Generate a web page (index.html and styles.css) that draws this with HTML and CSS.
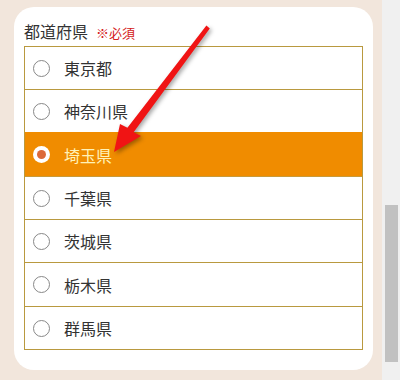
FILE: index.html
```html
<!DOCTYPE html>
<html lang="ja">
<head>
<meta charset="utf-8">
<link rel="stylesheet" href="styles.css">
</head>
<body>
<div class="page">
  <div class="main">
    <div class="card">
      <div class="label">都道府県<span class="req">※必須</span></div>
      <div class="list">
        <div class="row"><span class="radio"></span><span class="name">東京都</span></div>
        <div class="row"><span class="radio"></span><span class="name">神奈川県</span></div>
        <div class="row selected"><span class="radio"></span><span class="name">埼玉県</span></div>
        <div class="row"><span class="radio"></span><span class="name">千葉県</span></div>
        <div class="row"><span class="radio"></span><span class="name">茨城県</span></div>
        <div class="row"><span class="radio"></span><span class="name">栃木県</span></div>
        <div class="row"><span class="radio"></span><span class="name">群馬県</span></div>
      </div>
    </div>
  </div>
  <div class="scrollbar"><div class="thumb"></div></div>
  <svg class="arrow" width="400" height="380" viewBox="0 0 400 380">
    <polygon points="206.4,25.4 209.8,28.4 133.6,132.3 141,136 114,152 120,124 127.4,127.7" fill="#f01414"/>
  </svg>
</div>
</body>
</html>
```
FILE: styles.css
```css
html, body {
  margin: 0;
  padding: 0;
}
body {
  background: #f2e6dc;
  font-family: "Noto Sans CJK JP", "Noto Sans", sans-serif;
  color: #333;
}
.page {
  position: relative;
  display: flex;
  width: 400px;
  height: 380px;
  overflow: hidden;
}
.main {
  flex: 1;
  padding: 7px 9px 0 14px;
}
.card {
  background: #fff;
  border-radius: 20px;
  height: 363px;
  box-sizing: border-box;
  padding: 12px 10px 0 10px;
}
.label {
  font-size: 16px;
  line-height: 24px;
  height: 27px;
  color: #333;
}
.req {
  font-size: 13px;
  color: #d42020;
  margin-left: 8px;
}
.list {
  border: 1px solid #b9993f;
  border-top: none;
}
.row {
  display: flex;
  align-items: center;
  height: 42px;
  border-top: 1px solid #b9993f;
  padding-left: 8px;
  background: #fff;
}
.row:nth-child(3), .row:nth-child(6) {
  height: 43px;
}
.radio {
  width: 17px;
  height: 17px;
  box-sizing: border-box;
  border: 1px solid #888;
  border-radius: 50%;
  background: #fff;
  display: flex;
  align-items: center;
  justify-content: center;
  flex: none;
}
.name {
  margin-left: 14px;
  font-size: 16px;
  line-height: 20px;
  color: #333;
}
.row.selected {
  background: #f08c00;
  border-top-color: #f08c00;
}
.row.selected + .row {
  border-top-color: #c89a3a;
}
.row.selected .radio {
  border: none;
}
.row.selected .radio::after {
  content: "";
  width: 9px;
  height: 9px;
  border-radius: 50%;
  background: #dc6a3a;
}
.row.selected .name {
  color: #fff2b8;
}
.scrollbar {
  width: 18px;
  background: #f0f0f0;
  padding: 205px 2px 0 3px;
  box-sizing: border-box;
}
.thumb {
  height: 157px;
  background: #c1c1c1;
}
.arrow {
  position: absolute;
  left: 0;
  top: 0;
  pointer-events: none;
  filter: drop-shadow(2px 2px 2px rgba(0, 0, 0, 0.35));
}
```
